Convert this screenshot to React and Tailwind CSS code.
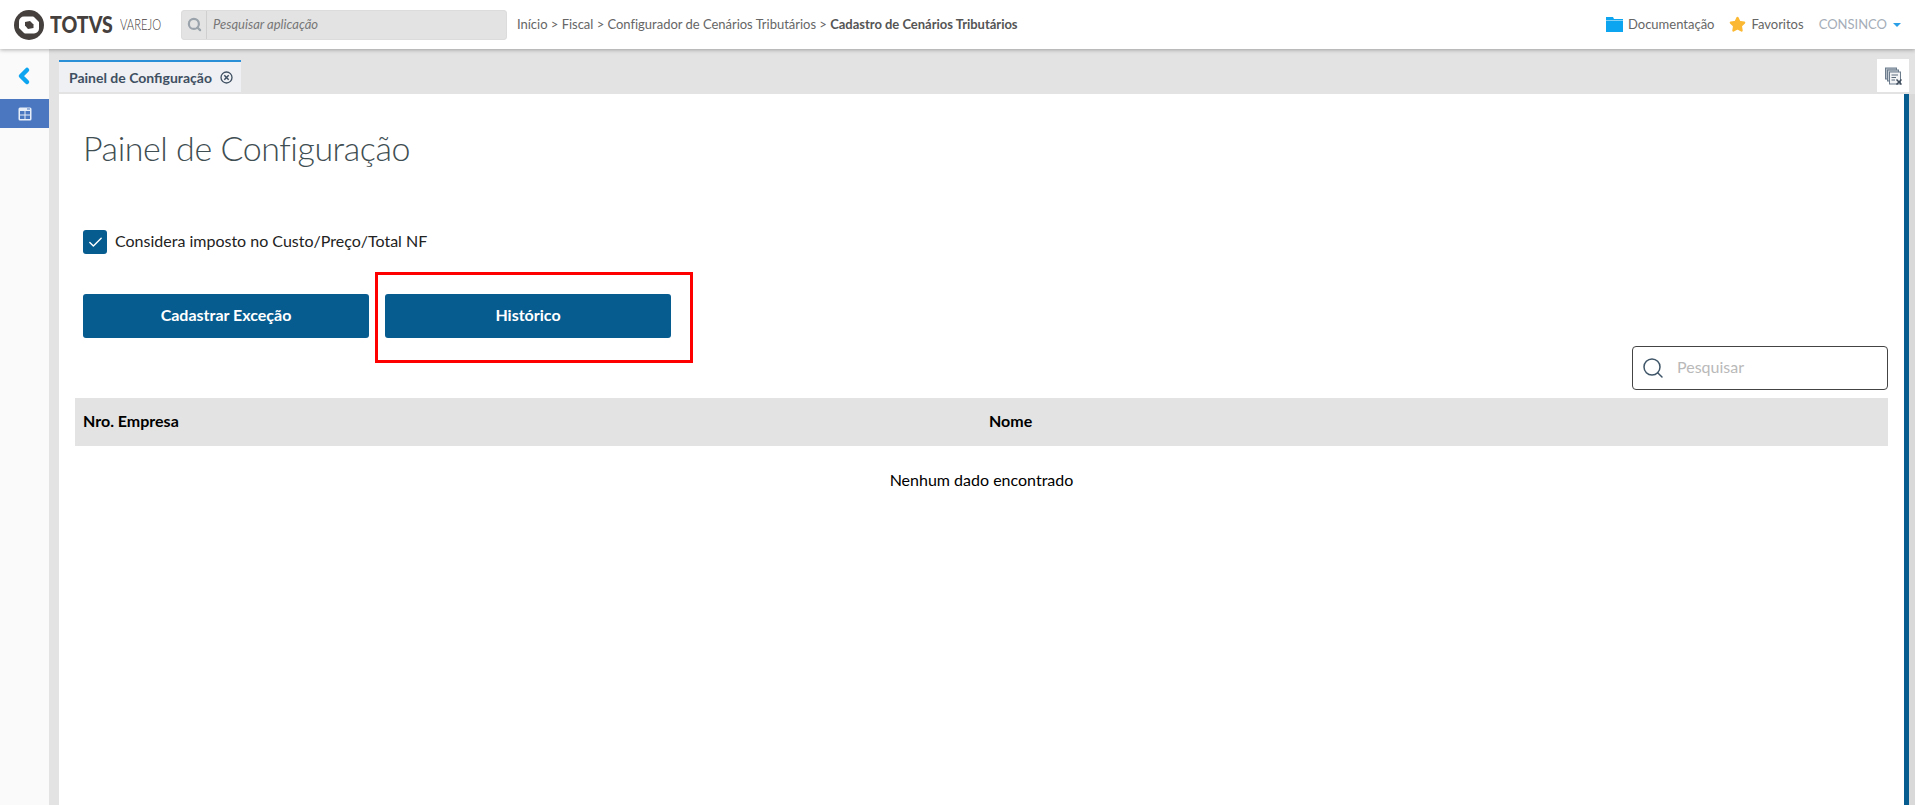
import React from "react";
import { Search, Star, ChevronLeft, Check } from "lucide-react";

function Logo() {
  return (
    <svg width="30" height="30" viewBox="0 0 30 30">
      <circle cx="15" cy="15" r="15" fill="#45403d" />
      <rect x="5" y="6.500" width="20" height="17" rx="5" fill="#fff" />
      <path d="M11 12L16 11L19.500 14.500V18L14 19L11 15.500Z" fill="#45403d" />
      <path d="M19 6L25.500 6V12.500Z" fill="#45403d" />
      <path d="M11 24L4.500 24V17.500Z" fill="#45403d" />
    </svg>
  );
}

function GridIcon() {
  return (
    <svg width="14" height="14" viewBox="0 0 14 14" fill="none">
      <rect x="0.5" y="0.5" width="13" height="13" rx="1.500" fill="#e8eef8" />
      <rect x="2" y="4" width="4.500" height="3.500" fill="#4a77c0" />
      <rect x="7.500" y="4" width="4.500" height="3.500" fill="#4a77c0" />
      <rect x="2" y="8.500" width="4.500" height="3.500" fill="#4a77c0" />
      <rect x="7.500" y="8.500" width="4.500" height="3.500" fill="#4a77c0" />
      <rect x="9" y="1.500" width="3" height="1" fill="#4a77c0" />
    </svg>
  );
}

function CloseTabsIcon() {
  return (
    <svg width="17" height="18" viewBox="0 0 17 18" fill="none">
      <rect x="0.500" y="1" width="11" height="11" fill="#b4bcc6" stroke="#6d7c8d" />
      <rect x="2.500" y="3" width="11" height="11" fill="#c8ced6" stroke="#6d7c8d" />
      <rect x="4.500" y="5" width="11" height="12" fill="#f3f4f6" stroke="#6d7c8d" />
      <path d="M6.500 8H13M6.500 10.500H11M6.500 13H10" stroke="#5b6b7c" />
      <path d="M11.500 12.500L16.500 17.500M16.500 12.500L11.500 17.500" stroke="#3d4b5a" strokeWidth="1.500" />
    </svg>
  );
}

export default function App() {
  return (
    <div className="w-[1915px] h-[805px] overflow-hidden flex flex-col bg-white font-['Lato',sans-serif]">
      {/* top bar */}
      <header className="relative z-10 h-[49px] shrink-0 flex items-center bg-white shadow-[0_1px_4px_rgba(0,0,0,0.3)]">
        <div className="ml-[14px] flex items-center w-[167px]">
          <Logo />
          <span className="ml-[6px] w-[64px] origin-left scale-x-[0.85] text-[23px] leading-none font-black text-[#45403d]">TOTVS</span>
          <span className="ml-[6px] w-[42px] origin-left scale-x-[0.75] text-[15px] leading-none font-light text-[#45403d]">VAREJO</span>
        </div>
        <div className="w-[326px] h-[30px] flex items-center bg-[#e3e3e3] border border-[#dcdcdc] rounded-[3px]">
          <div className="w-[25px] h-full flex items-center justify-center border-r border-[#cfcfcf]">
            <Search size={15} strokeWidth={3.500} className="text-[#9aa3ab]" />
          </div>
          <span className="ml-[6px] text-[13px] italic text-[#777]">Pesquisar aplicação</span>
        </div>
        <nav className="ml-[10px] text-[13px] tracking-[-0.02px] text-[#666] whitespace-nowrap">
          Início &gt; Fiscal &gt; Configurador de Cenários Tributários &gt;{" "}
          <span className="font-bold text-[#555]">Cadastro de Cenários Tributários</span>
        </nav>
        <div className="ml-auto mr-[14px] flex items-center text-[13px] text-[#666]">
          <svg width="17" height="15" viewBox="0 0 17 15" className="mr-[5px]">
            <path d="M0 0H7L8 2H17V3.500H0Z M0 4H17V15H0Z" fill="#0ea5f0" />
          </svg>
          <span>Documentação</span>
          <Star size={17} fill="#fbb832" stroke="#fbb832" className="ml-[15px] mr-[5px]" />
          <span>Favoritos</span>
          <span className="ml-[15px] text-[#a5adb8]">CONSINCO</span>
          <span className="ml-[6px] w-0 h-0 border-x-[4px] border-x-transparent border-t-[4px] border-t-[#2a9fe8]" />
        </div>
      </header>

      <div className="flex-1 flex min-h-0">
        {/* left rail */}
        <aside className="w-[49px] shrink-0 bg-[#fafafa] flex flex-col">
          <div className="h-[50px] flex items-center justify-center">
            <ChevronLeft size={24} strokeWidth={4.500} className="text-[#0ea5f0] mt-[3px] -ml-[2px]" />
          </div>
          <div className="h-[29px] bg-[#4a77c0] flex items-center justify-center">
            <GridIcon />
          </div>
        </aside>

        <main className="flex-1 min-w-0 flex flex-col bg-[#e3e3e3]">
          {/* tab strip */}
          <div className="h-[45px] shrink-0 flex pl-[10px] pt-[11px] pr-[6px] pb-[2px] justify-between">
            <div className="w-[182px] flex items-center pl-[10px] bg-[#eef0f3] border-t-2 border-[#2a8fd6]">
              <span className="text-[14px] font-bold text-[#3f4f62]">Painel de Configuração</span>
              <svg width="13" height="13" viewBox="0 0 13 13" fill="none" className="ml-[8px]">
                <circle cx="6.500" cy="6.500" r="5.500" stroke="#3f4f62" strokeWidth="1.300" />
                <path d="M4.300 4.300L8.700 8.700M8.700 4.300L4.300 8.700" stroke="#3f4f62" strokeWidth="1.500" />
              </svg>
            </div>
            <div className="w-[32px] -mt-[1px] bg-white flex items-center justify-center">
              <CloseTabsIcon />
            </div>
          </div>

          <div className="flex-1 min-h-0 flex pl-[10px]">
            {/* page body */}
            <section className="flex-1 min-w-0 bg-white flex flex-col">
              <h1 className="ml-[24px] mt-[32px] text-[34px] leading-[44px] font-light tracking-[-0.45px] text-[#3f4e52]">
                Painel de Configuração
              </h1>

              <label className="ml-[24px] mt-[60px] flex items-center">
                <span className="w-[24px] h-[24px] rounded-[3px] bg-[#065c8f] flex items-center justify-center">
                  <Check size={17} strokeWidth={2} className="text-white" />
                </span>
                <span className="ml-[8px] -mt-[2px] text-[16px] text-[#222]">Considera imposto no Custo/Preço/Total NF</span>
              </label>

              <div className="ml-[24px] mt-[40px] flex gap-[16px]">
                <button className="w-[286px] h-[44px] pb-[2px] rounded-[3px] bg-[#065c8f] text-white text-[16px] font-bold">
                  Cadastrar Exceção
                </button>
                <div className="relative">
                  <button className="w-[286px] h-[44px] pb-[2px] rounded-[3px] bg-[#065c8f] text-white text-[16px] font-bold">
                    Histórico
                  </button>
                  {/* highlight box drawn over the screenshot */}
                  <div className="absolute left-[-10px] top-[-22px] w-[318px] h-[91px] border-[3px] border-[#f00] pointer-events-none" />
                </div>
              </div>

              <div className="mt-[8px] mr-[16px] flex justify-end">
                <div className="w-[256px] h-[44px] flex items-center border border-[#444] rounded-[4px]">
                  <Search size={24} strokeWidth={1.500} className="ml-[8px] text-[#3f5568]" />
                  <span className="ml-[12px] -mt-[2px] text-[16px] text-[#b9b9b9]">Pesquisar</span>
                </div>
              </div>

              <div className="mt-[8px] mx-[16px] h-[48px] pb-[2px] flex items-center bg-[#e3e3e3] text-[16px] font-bold text-black">
                <span className="ml-[8px] w-[906px]">Nro. Empresa</span>
                <span>Nome</span>
              </div>
              <p className="mx-[16px] mt-[22px] text-center text-[16px] leading-[24px] text-black">
                Nenhum dado encontrado
              </p>
            </section>
            {/* scrollbar */}
            <div className="w-[5px] shrink-0 bg-[#065c8f]" />
            <div className="w-[6px] shrink-0 bg-[#d9d9d9]" />
          </div>
        </main>
      </div>
    </div>
  );
}
